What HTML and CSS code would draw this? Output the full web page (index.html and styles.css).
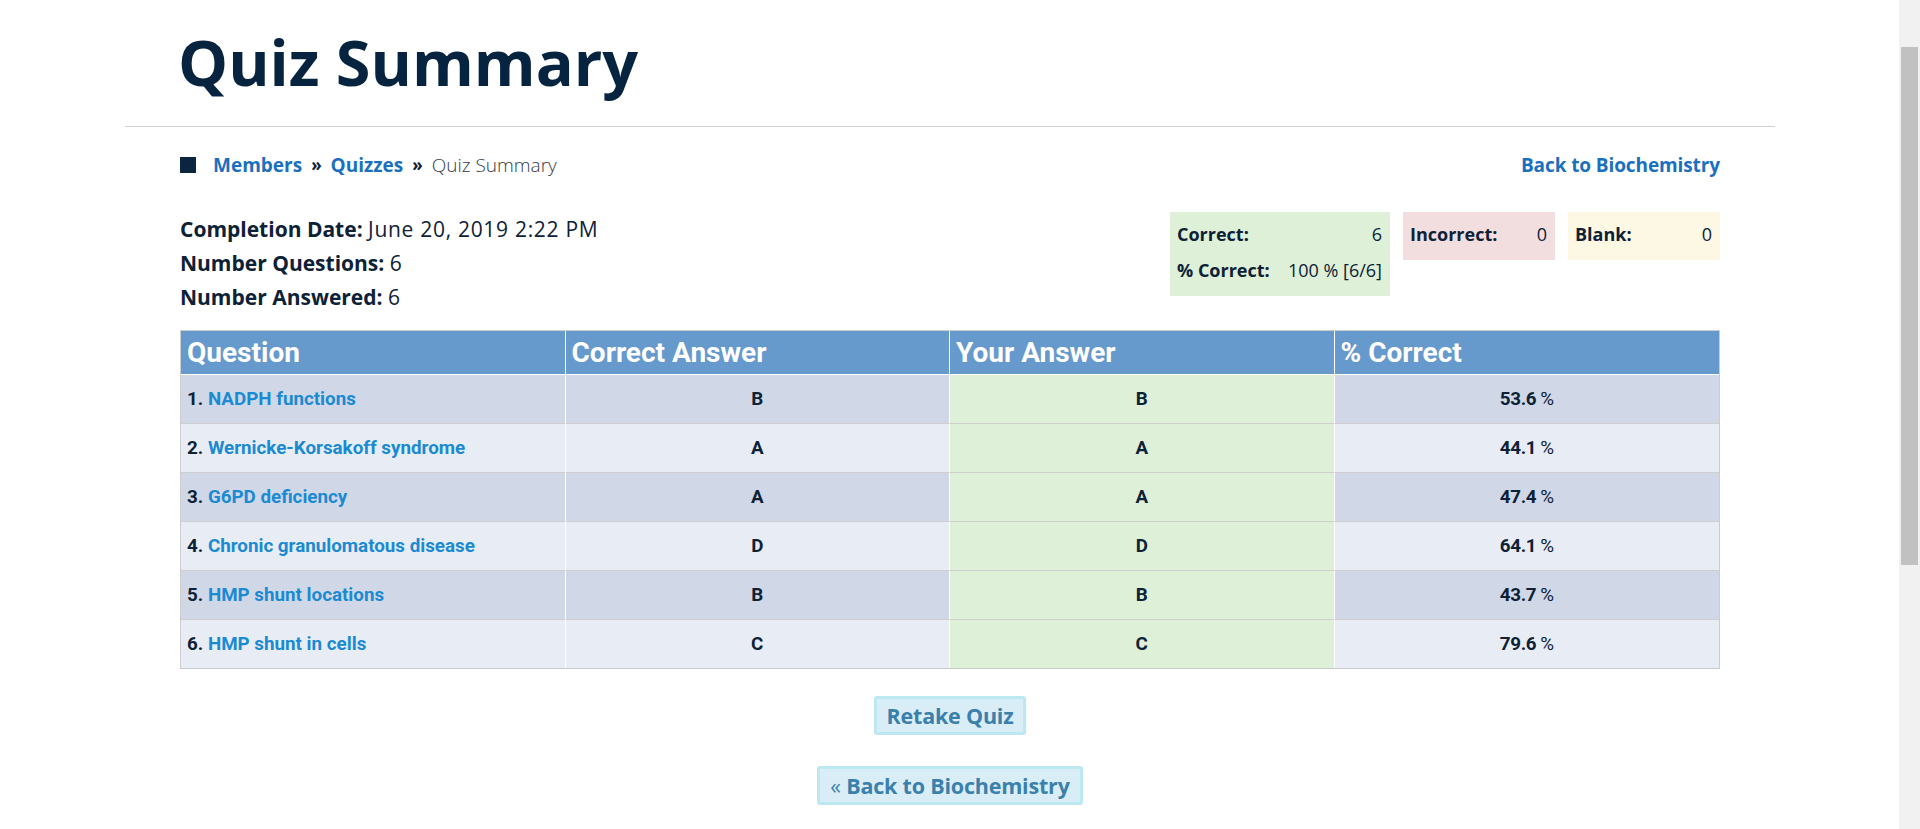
FILE: index.html
```html
<!DOCTYPE html>
<html lang="en">
<head>
<meta charset="utf-8">
<title>Quiz Summary</title>
<link rel="stylesheet" href="styles.css">
</head>
<body>
<div class="page-head">
  <h1 class="page-title">Quiz Summary</h1>
</div>
<main class="content">
  <div class="crumb-row">
    <nav class="crumbs">
      <span class="crumb-mark"></span>
      <a class="crumb-link" href="#">Members</a>
      <span class="crumb-sep">&raquo;</span>
      <a class="crumb-link" href="#">Quizzes</a>
      <span class="crumb-sep">&raquo;</span>
      <span class="crumb-current">Quiz Summary</span>
    </nav>
    <a class="back-link" href="#">Back to Biochemistry</a>
  </div>

  <div class="summary-row">
    <div class="info">
      <div class="info-line"><b>Completion Date:</b> <span class="info-value">June 20, 2019 2:22 PM</span></div>
      <div class="info-line"><b>Number Questions:</b> <span class="info-value">6</span></div>
      <div class="info-line"><b>Number Answered:</b> <span class="info-value">6</span></div>
    </div>
    <div class="stats">
      <div class="stat stat-correct">
        <span class="stat-label">Correct:</span><span class="stat-value">6</span>
        <span class="stat-label">% Correct:</span><span class="stat-value">100 % [6/6]</span>
      </div>
      <div class="stat stat-incorrect">
        <span class="stat-label">Incorrect:</span><span class="stat-value">0</span>
      </div>
      <div class="stat stat-blank">
        <span class="stat-label">Blank:</span><span class="stat-value">0</span>
      </div>
    </div>
  </div>

  <table class="results">
    <thead>
      <tr><th>Question</th><th>Correct Answer</th><th>Your Answer</th><th>% Correct</th></tr>
    </thead>
    <tbody>
      <tr class="odd"><td>1. <a href="#">NADPH functions</a></td><td class="c">B</td><td class="c yours">B</td><td class="c num">53.6<span class="pct">%</span></td></tr>
      <tr class="even"><td>2. <a href="#">Wernicke-Korsakoff syndrome</a></td><td class="c">A</td><td class="c yours">A</td><td class="c num">44.1<span class="pct">%</span></td></tr>
      <tr class="odd"><td>3. <a href="#">G6PD deficiency</a></td><td class="c">A</td><td class="c yours">A</td><td class="c num">47.4<span class="pct">%</span></td></tr>
      <tr class="even"><td>4. <a href="#">Chronic granulomatous disease</a></td><td class="c">D</td><td class="c yours">D</td><td class="c num">64.1<span class="pct">%</span></td></tr>
      <tr class="odd"><td>5. <a href="#">HMP shunt locations</a></td><td class="c">B</td><td class="c yours">B</td><td class="c num">43.7<span class="pct">%</span></td></tr>
      <tr class="even last"><td>6. <a href="#">HMP shunt in cells</a></td><td class="c">C</td><td class="c yours">C</td><td class="c num">79.6<span class="pct">%</span></td></tr>
    </tbody>
  </table>

  <div class="actions">
    <a class="btn" href="#">Retake Quiz</a>
    <a class="btn" href="#"><span class="btn-arrow">&laquo;</span> Back to Biochemistry</a>
  </div>
</main>
<div class="scrollbar"><div class="scrollbar-thumb"></div></div>
</body>
</html>
```

FILE: styles.css
```css
html, body {
  margin: 0;
  padding: 0;
  background: #ffffff;
}
body {
  font-family: "Open Sans", "Liberation Sans", sans-serif;
  color: #0d2137;
}
a {
  text-decoration: none;
}
.page-head {
  width: 1650px;
  margin-left: 125px;
  box-sizing: border-box;
  padding: 29px 0 32px 53px;
  border-bottom: 1px solid #d0d0d0;
}
.page-title {
  margin: 0;
  font-family: "Open Sans", "Liberation Sans", sans-serif;
  font-weight: 700;
  font-size: 63px;
  line-height: 65px;
  color: #062440;
}
.content {
  width: 1540px;
  margin-left: 180px;
}
.crumb-row {
  margin-top: 25px;
  display: flex;
  justify-content: space-between;
  align-items: center;
  font-size: 19px;
  line-height: 26px;
}
.crumbs {
  display: flex;
  align-items: center;
}
.crumb-mark {
  width: 16px;
  height: 16px;
  background: #0b2540;
  margin-right: 17px;
}
.crumb-link {
  color: #1a70bf;
  font-weight: 700;
}
.crumb-sep {
  font-size: 17px;
  font-weight: 700;
  color: #0d2137;
  margin: 0 9px;
}
.crumb-current {
  font-weight: 300;
  color: #333b44;
}
.back-link {
  color: #1a70bf;
  font-weight: 700;
  letter-spacing: -0.1px;
}
.summary-row {
  margin-top: 34px;
  display: flex;
  justify-content: space-between;
  align-items: flex-start;
}
.info {
  font-size: 21px;
  line-height: 34px;
}
.info-line b {
  font-weight: 700;
}
.info-value {
  letter-spacing: 0.7px;
}
.stats {
  display: flex;
  gap: 13px;
  align-items: flex-start;
}
.stat {
  display: grid;
  grid-template-columns: auto 1fr;
  column-gap: 18px;
  padding: 4px 8px 8px 7px;
  font-size: 18px;
  line-height: 36px;
  box-sizing: border-box;
}
.stat-correct {
  width: 220px;
  background: #dff0d8;
}
.stat-incorrect {
  width: 152px;
  background: #f2dede;
}
.stat-blank {
  width: 152px;
  background: #fcf8e3;
}
.stat-label {
  font-weight: 700;
}
.stat-value {
  text-align: right;
  font-weight: 400;
}
.results {
  margin-top: 16px;
  width: 1540px;
  table-layout: fixed;
  border-collapse: separate;
  border-spacing: 0;
  border: 1px solid #cccccc;
  font-family: Roboto, "Liberation Sans", sans-serif;
}
.results th {
  background: #6699cc;
  color: #ffffff;
  font-weight: 700;
  font-size: 28px;
  line-height: 33px;
  padding: 5px 6px;
  text-align: left;
  border-right: 1px solid #ffffff;
  border-bottom: 1px solid #ffffff;
}
.results td {
  font-weight: 700;
  font-size: 18.8px;
  line-height: 22px;
  padding: 13px 6px;
  color: #0d2137;
  border-right: 1px solid #ffffff;
  border-bottom: 1px solid #cfcfcf;
}
.results th:last-child,
.results td:last-child {
  border-right: none;
}
.results tr.last td {
  border-bottom: none;
}
.results tr.odd td {
  background: #d0d8e8;
}
.results tr.even td {
  background: #e8edf5;
}
.results tr td.yours {
  background: #dff0d8;
}
.results td.c {
  text-align: center;
}
.results td.num {
  letter-spacing: -0.3px;
}
.results td a {
  color: #1a8ad2;
}
.pct {
  font-weight: 400;
  margin-left: 4px;
}
.actions {
  margin-top: 27px;
  display: flex;
  flex-direction: column;
  align-items: center;
  gap: 31px;
}
.btn {
  display: block;
  background: #d9edf7;
  border: 3px solid #bce8f1;
  border-radius: 3px;
  padding: 0 10px;
  font-size: 21.5px;
  line-height: 33px;
  font-weight: 700;
  color: #3a80ab;
  letter-spacing: -0.2px;
}
.btn-arrow {
  font-weight: 400;
}
.scrollbar {
  position: fixed;
  top: 0;
  right: 0;
  width: 21px;
  height: 100vh;
  background: #f1f1f1;
}
.scrollbar-thumb {
  position: absolute;
  top: 47px;
  left: 2px;
  width: 17px;
  height: 518px;
  background: #c1c1c1;
}
```
